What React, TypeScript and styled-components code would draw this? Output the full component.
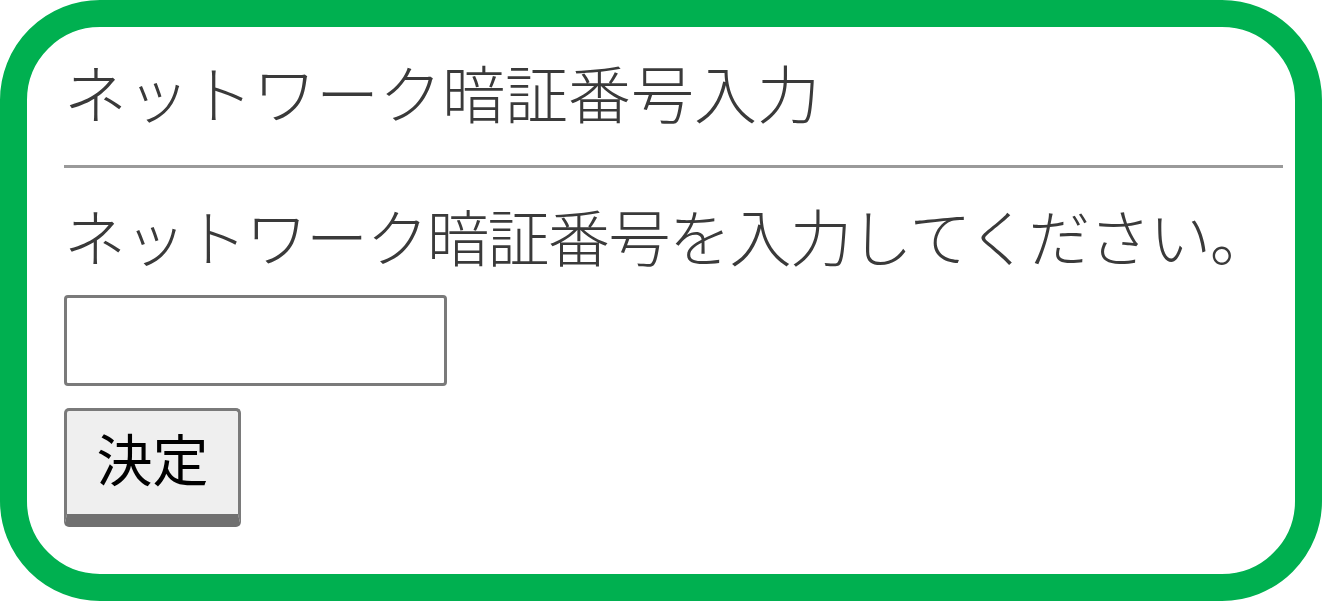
import React from "react";
import styled, { createGlobalStyle } from "styled-components";

const Global = createGlobalStyle`
  html, body { margin: 0; padding: 0; background: #ffffff; }
  body { font-family: "Noto Sans CJK JP", "Noto Sans", sans-serif; }
`;

const Frame = styled.div`
  box-sizing: border-box;
  width: 1322px;
  height: 601px;
  border: 27px solid #00b050;
  border-radius: 100px;
  background: #ffffff;
  padding: 32px 12px 0 37px;
  display: flex;
  flex-direction: column;
  align-items: flex-start;
`;

const Title = styled.h1`
  margin: 0;
  font-size: 63px;
  line-height: 63px;
  font-weight: 300;
  color: #3a3a3a;
`;

const Rule = styled.hr`
  align-self: stretch;
  margin: 43px 0 0 0;
  height: 0;
  border: none;
  border-top: 3px solid #9a9a9a;
`;

const Message = styled.p`
  margin: 36px 0 0 0;
  font-size: 62px;
  line-height: 62px;
  font-weight: 300;
  letter-spacing: -1.5px;
  color: #3a3a3a;
  white-space: nowrap;
`;

const PinInput = styled.input`
  box-sizing: border-box;
  margin-top: 29px;
  width: 383px;
  height: 91px;
  border: 3px solid #7a7a7a;
  border-radius: 4px;
  background: #ffffff;
  font-size: 50px;
  padding: 0 10px;
  outline: none;
`;

const Submit = styled.button`
  box-sizing: border-box;
  margin-top: 22px;
  width: 177px;
  height: 119px;
  border: 3px solid #7a7a7a;
  border-bottom: 13px solid #707070;
  border-radius: 5px;
  background: #efefef;
  color: #000000;
  font-family: "Noto Sans CJK JP", sans-serif;
  font-size: 56px;
  line-height: 1;
  padding: 0 0 12px 0;
  display: flex;
  align-items: center;
  justify-content: center;
`;

export default function App() {
  return (
    <>
      <Global />
      <Frame>
        <Title>ネットワーク暗証番号入力</Title>
        <Rule />
        <Message>ネットワーク暗証番号を入力してください。</Message>
        <PinInput type="password" />
        <Submit type="button">決定</Submit>
      </Frame>
    </>
  );
}
